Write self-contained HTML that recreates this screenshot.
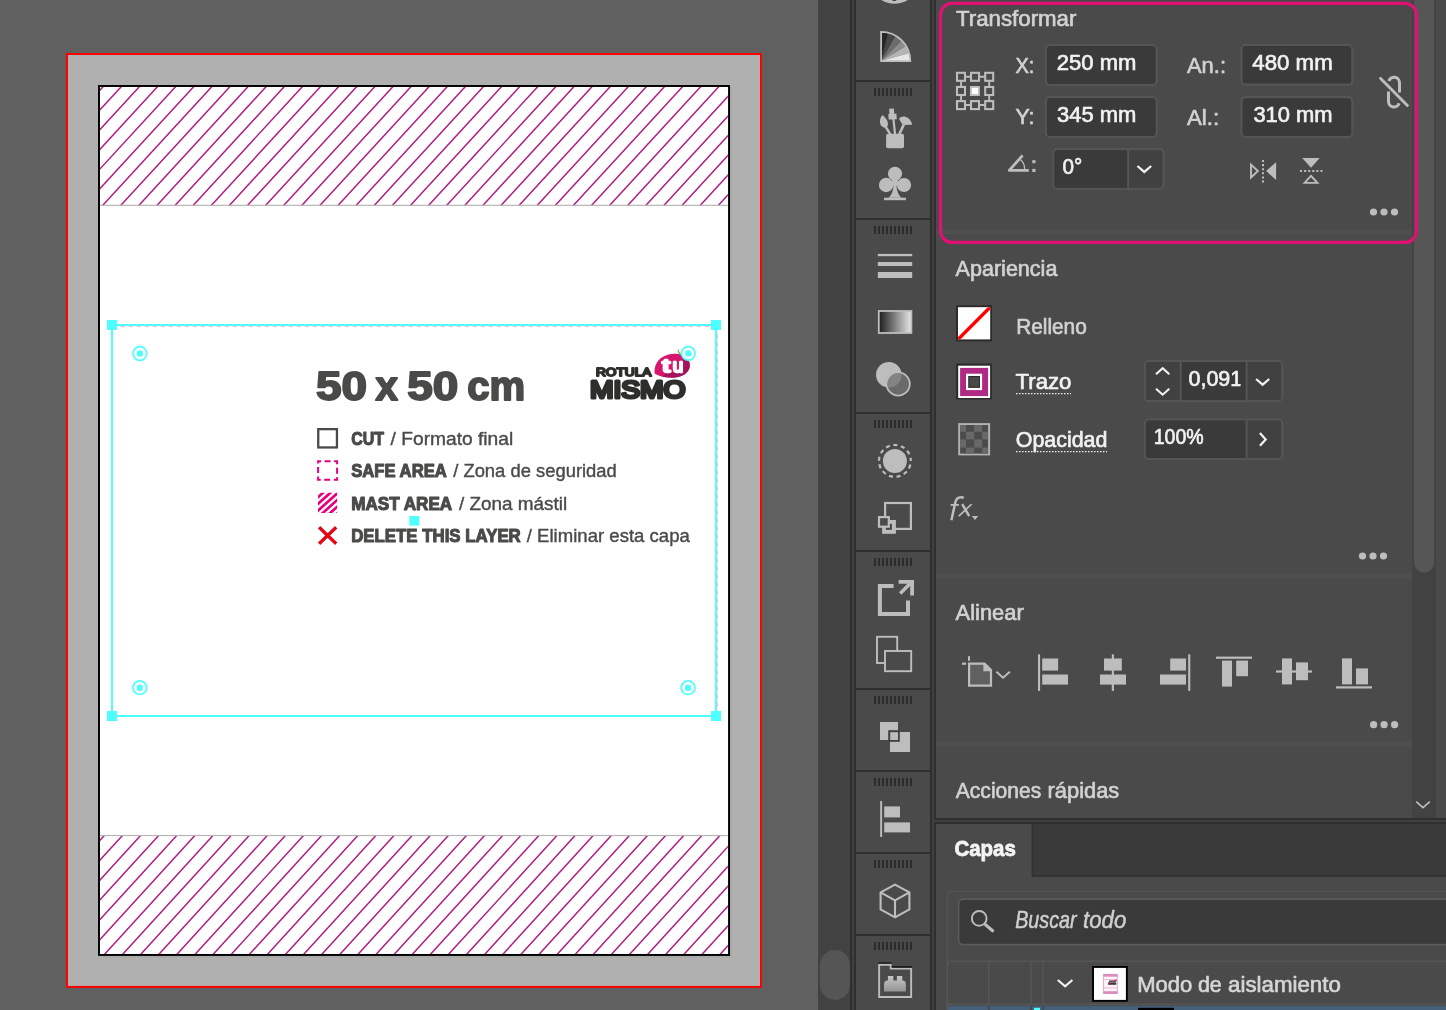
<!DOCTYPE html>
<html><head><meta charset="utf-8"><title>Illustrator</title>
<style>
html,body{margin:0;padding:0;background:#4a4a4a;overflow:hidden}
svg{display:block;will-change:transform}
text{font-family:"Liberation Sans",sans-serif;white-space:pre}
</style></head><body>
<svg width="1446" height="1010" viewBox="0 0 1446 1010">
<rect x="0" y="0" width="818" height="1010" fill="#606060" />
<rect x="67" y="54" width="694" height="932.9" fill="#b0b0b0" stroke="#ff0000" stroke-width="2"/>
<rect x="101" y="956" width="631" height="1.8" fill="#aaaaaa" />
<rect x="730" y="88" width="1.9" height="869.8" fill="#aaaaaa" />
<rect x="99" y="86" width="630.05" height="868.95" fill="#ffffff" stroke="#000" stroke-width="1.95"/>
<clipPath id="h1"><rect x="99.9" y="86.9" width="628" height="118.5"/></clipPath>
<g clip-path="url(#h1)" stroke="#b01f80" stroke-width="1.5" fill="none">
<path d="M-7.80 207.40L104.79 84.90M10.31 207.40L122.90 84.90M28.41 207.40L141.01 84.90M46.52 207.40L159.11 84.90M64.63 207.40L177.22 84.90M82.73 207.40L195.32 84.90M100.84 207.40L213.43 84.90M118.94 207.40L231.54 84.90M137.05 207.40L249.64 84.90M155.16 207.40L267.75 84.90M173.26 207.40L285.85 84.90M191.37 207.40L303.96 84.90M209.47 207.40L322.07 84.90M227.58 207.40L340.17 84.90M245.69 207.40L358.28 84.90M263.79 207.40L376.38 84.90M281.90 207.40L394.49 84.90M300.00 207.40L412.60 84.90M318.11 207.40L430.70 84.90M336.22 207.40L448.81 84.90M354.32 207.40L466.91 84.90M372.43 207.40L485.02 84.90M390.53 207.40L503.13 84.90M408.64 207.40L521.23 84.90M426.75 207.40L539.34 84.90M444.85 207.40L557.44 84.90M462.96 207.40L575.55 84.90M481.06 207.40L593.66 84.90M499.17 207.40L611.76 84.90M517.28 207.40L629.87 84.90M535.38 207.40L647.97 84.90M553.49 207.40L666.08 84.90M571.59 207.40L684.19 84.90M589.70 207.40L702.29 84.90M607.81 207.40L720.40 84.90M625.91 207.40L738.50 84.90M644.02 207.40L756.61 84.90M662.12 207.40L774.72 84.90M680.23 207.40L792.82 84.90M698.34 207.40L810.93 84.90M716.44 207.40L829.03 84.90"/>
</g>
<clipPath id="h2"><rect x="99.9" y="835.2" width="628" height="118.9"/></clipPath>
<g clip-path="url(#h2)" stroke="#b01f80" stroke-width="1.5" fill="none">
<path d="M-5.71 956.10L106.43 833.20M12.40 956.10L124.53 833.20M30.50 956.10L142.64 833.20M48.61 956.10L160.75 833.20M66.72 956.10L178.85 833.20M84.82 956.10L196.96 833.20M102.93 956.10L215.06 833.20M121.03 956.10L233.17 833.20M139.14 956.10L251.28 833.20M157.25 956.10L269.38 833.20M175.35 956.10L287.49 833.20M193.46 956.10L305.59 833.20M211.56 956.10L323.70 833.20M229.67 956.10L341.81 833.20M247.78 956.10L359.91 833.20M265.88 956.10L378.02 833.20M283.99 956.10L396.12 833.20M302.09 956.10L414.23 833.20M320.20 956.10L432.34 833.20M338.31 956.10L450.44 833.20M356.41 956.10L468.55 833.20M374.52 956.10L486.65 833.20M392.62 956.10L504.76 833.20M410.73 956.10L522.87 833.20M428.84 956.10L540.97 833.20M446.94 956.10L559.08 833.20M465.05 956.10L577.18 833.20M483.15 956.10L595.29 833.20M501.26 956.10L613.40 833.20M519.37 956.10L631.50 833.20M537.47 956.10L649.61 833.20M555.58 956.10L667.71 833.20M573.68 956.10L685.82 833.20M591.79 956.10L703.93 833.20M609.90 956.10L722.03 833.20M628.00 956.10L740.14 833.20M646.11 956.10L758.24 833.20M664.21 956.10L776.35 833.20M682.32 956.10L794.46 833.20M700.43 956.10L812.56 833.20M718.53 956.10L830.67 833.20"/>
</g>
<rect x="99.9" y="204.75" width="628" height="1.15" fill="#b6b3b4" />
<rect x="99.9" y="834.95" width="628" height="1.15" fill="#b6b3b4" />
<text x="315.9" y="399.9" font-size="41" fill="#4a4a49" stroke="#4a4a49" stroke-width="1.9" stroke-linejoin="round" textLength="51" lengthAdjust="spacingAndGlyphs" font-weight="bold" >50</text>
<text x="375.6" y="399.9" font-size="41" fill="#4a4a49" stroke="#4a4a49" stroke-width="1.9" stroke-linejoin="round" textLength="22.4" lengthAdjust="spacingAndGlyphs" font-weight="bold" >x</text>
<text x="407.2" y="399.9" font-size="41" fill="#4a4a49" stroke="#4a4a49" stroke-width="1.9" stroke-linejoin="round" textLength="51" lengthAdjust="spacingAndGlyphs" font-weight="bold" >50</text>
<text x="467.3" y="399.9" font-size="41" fill="#4a4a49" stroke="#4a4a49" stroke-width="1.9" stroke-linejoin="round" textLength="58" lengthAdjust="spacingAndGlyphs" font-weight="bold" >cm</text>
<text x="351.2" y="445" font-size="18.4" fill="#4a4a49" stroke="#4a4a49" stroke-width="1.1" stroke-linejoin="round" textLength="32.8" lengthAdjust="spacingAndGlyphs" font-weight="bold" >CUT</text>
<text x="390.6" y="445" font-size="19" fill="#4a4a49" stroke="#4a4a49" stroke-width="0.4" stroke-linejoin="round" textLength="122.6" lengthAdjust="spacingAndGlyphs" >/ Formato final</text>
<text x="351.2" y="477.3" font-size="18.4" fill="#4a4a49" stroke="#4a4a49" stroke-width="1.1" stroke-linejoin="round" textLength="95.6" lengthAdjust="spacingAndGlyphs" font-weight="bold" >SAFE AREA</text>
<text x="453.2" y="477.3" font-size="19" fill="#4a4a49" stroke="#4a4a49" stroke-width="0.4" stroke-linejoin="round" textLength="163.6" lengthAdjust="spacingAndGlyphs" >/ Zona de seguridad</text>
<text x="351.2" y="509.7" font-size="18.4" fill="#4a4a49" stroke="#4a4a49" stroke-width="1.1" stroke-linejoin="round" textLength="101" lengthAdjust="spacingAndGlyphs" font-weight="bold" >MAST AREA</text>
<text x="459" y="509.7" font-size="19" fill="#4a4a49" stroke="#4a4a49" stroke-width="0.4" stroke-linejoin="round" textLength="108.2" lengthAdjust="spacingAndGlyphs" >/ Zona mástil</text>
<text x="351.2" y="542.3" font-size="18.4" fill="#4a4a49" stroke="#4a4a49" stroke-width="1.1" stroke-linejoin="round" textLength="169.6" lengthAdjust="spacingAndGlyphs" font-weight="bold" >DELETE THIS LAYER</text>
<text x="526.8" y="542.3" font-size="19" fill="#4a4a49" stroke="#4a4a49" stroke-width="0.4" stroke-linejoin="round" textLength="163" lengthAdjust="spacingAndGlyphs" >/ Eliminar esta capa</text>
<rect x="318.25" y="429.15" width="18.7" height="18.3" fill="none" stroke="#4a4a49" stroke-width="2.3"/>
<rect x="318.1" y="461.2" width="19" height="18.6" fill="none" stroke="#e6007e" stroke-width="2" stroke-dasharray="6 3.5" stroke-dashoffset="3"/>
<clipPath id="lh"><rect x="318" y="492.8" width="19.1" height="20.1"/></clipPath>
<g clip-path="url(#lh)" stroke="#e6007e" stroke-width="2.7" fill="none"><path d="M316 478.90L340 457.30M316 485.60L340 464.00M316 492.30L340 470.70M316 499.00L340 477.40M316 505.70L340 484.10M316 512.40L340 490.80M316 519.10L340 497.50M316 525.80L340 504.20M316 532.50L340 510.90M316 539.20L340 517.60"/></g>
<path d="M319.1 527.3L336.2 543.8M336.2 527.3L319.1 543.8" stroke="#e30613" stroke-width="3.3" fill="none"/>
<text x="596" y="376.1" font-size="11.8" fill="#2e2e2d" textLength="55.4" lengthAdjust="spacingAndGlyphs" stroke="#2e2e2d" stroke-width="1.9" stroke-linejoin="round" stroke-linecap="round">ROTULA</text>
<text x="589.9" y="398.2" font-size="24.4" fill="#2e2e2d" textLength="95.6" lengthAdjust="spacingAndGlyphs" stroke="#2e2e2d" stroke-width="3.2" stroke-linejoin="round" stroke-linecap="round">MISMO</text>
<path d="M654.6 373.4 C653.6 362 662 354.4 674 353.8 C684 353.4 690.4 358.6 689.8 366 C689 373.6 680 378.6 669 377.6 C662.6 377 658 375.6 654.6 373.4Z" fill="#d6156c"/>
<path d="M683.4 357.4 C687 359 690.4 362 689.8 366.4 C689 373.6 680 378.6 669 377.6 C666.4 377.4 664 377 662 376.4 L 668 372.6 L 683 372.4 Z" fill="#a5125c"/>
<path d="M678.2 349.6 C678.4 351.6 679.4 353 680.8 354 L 679.4 354.2 C 678.4 353 678 351.4 678.2 349.6Z" fill="#6ab42d" stroke="#6ab42d" stroke-width="0.6"/>
<text x="662.3" y="371.9" font-size="18.6" fill="#fff" textLength="7.8" lengthAdjust="spacingAndGlyphs" stroke="#fff" stroke-width="2.3" stroke-linejoin="round" stroke-linecap="round">t</text>
<text x="672.7" y="371.9" font-size="18.2" fill="#fff" textLength="10.4" lengthAdjust="spacingAndGlyphs" stroke="#fff" stroke-width="2.3" stroke-linejoin="round" stroke-linecap="round">u</text>
<path d="M717.6 326.5V716" stroke="#f9b6d0" stroke-width="1" stroke-dasharray="4 4" fill="none"/>
<path d="M113 326.6H716" stroke="#f9b6d0" stroke-width="1" stroke-dasharray="4 4" fill="none"/>
<rect x="112" y="325" width="604" height="391" fill="none" stroke="#4dffff" stroke-width="2"/>
<rect x="107" y="320" width="10" height="10" fill="#4dffff" />
<rect x="711" y="320" width="10" height="10" fill="#4dffff" />
<rect x="107" y="711" width="10" height="10" fill="#4dffff" />
<rect x="711" y="711" width="10" height="10" fill="#4dffff" />
<rect x="409.3" y="516" width="10" height="9.6" fill="#4dffff" />
<circle cx="139.9" cy="353.5" r="6.8" fill="#ffffff" stroke="#4dffff" stroke-width="1.7"/><circle cx="139.9" cy="353.5" r="3.2" fill="#4dffff"/>
<circle cx="688.3" cy="353.4" r="6.8" fill="#ffffff" stroke="#4dffff" stroke-width="1.7"/><circle cx="688.3" cy="353.4" r="3.2" fill="#4dffff"/>
<circle cx="139.8" cy="687.7" r="6.8" fill="#ffffff" stroke="#4dffff" stroke-width="1.7"/><circle cx="139.8" cy="687.7" r="3.2" fill="#4dffff"/>
<circle cx="688.1" cy="687.7" r="6.8" fill="#ffffff" stroke="#4dffff" stroke-width="1.7"/><circle cx="688.1" cy="687.7" r="3.2" fill="#4dffff"/>
<rect x="818" y="0" width="32" height="1010" fill="#424242" />
<rect x="820" y="950" width="30" height="50" rx="15" fill="#555555"/>
<rect x="850" y="0" width="2" height="1010" fill="#2f2f2f" />
<rect x="852" y="0" width="2" height="1010" fill="#404040" />
<rect x="854" y="0" width="2" height="1010" fill="#2f2f2f" />
<rect x="856" y="0" width="74" height="1010" fill="#4a4a4a" />
<rect x="930" y="0" width="2" height="1010" fill="#2f2f2f" />
<rect x="932" y="0" width="2" height="1010" fill="#404040" />
<rect x="934" y="0" width="2" height="1010" fill="#2f2f2f" />
<rect x="856" y="80" width="74" height="2" fill="#2f2f2f" />
<rect x="874" y="88" width="2.05" height="8" fill="#2c2c2c" />
<rect x="878" y="88" width="2.05" height="8" fill="#2c2c2c" />
<rect x="882" y="88" width="2.05" height="8" fill="#2c2c2c" />
<rect x="886" y="88" width="2.05" height="8" fill="#2c2c2c" />
<rect x="890" y="88" width="2.05" height="8" fill="#2c2c2c" />
<rect x="894" y="88" width="2.05" height="8" fill="#2c2c2c" />
<rect x="898" y="88" width="2.05" height="8" fill="#2c2c2c" />
<rect x="902" y="88" width="2.05" height="8" fill="#2c2c2c" />
<rect x="906" y="88" width="2.05" height="8" fill="#2c2c2c" />
<rect x="910" y="88" width="2.05" height="8" fill="#2c2c2c" />
<rect x="856" y="218" width="74" height="2" fill="#2f2f2f" />
<rect x="874" y="226" width="2.05" height="8" fill="#2c2c2c" />
<rect x="878" y="226" width="2.05" height="8" fill="#2c2c2c" />
<rect x="882" y="226" width="2.05" height="8" fill="#2c2c2c" />
<rect x="886" y="226" width="2.05" height="8" fill="#2c2c2c" />
<rect x="890" y="226" width="2.05" height="8" fill="#2c2c2c" />
<rect x="894" y="226" width="2.05" height="8" fill="#2c2c2c" />
<rect x="898" y="226" width="2.05" height="8" fill="#2c2c2c" />
<rect x="902" y="226" width="2.05" height="8" fill="#2c2c2c" />
<rect x="906" y="226" width="2.05" height="8" fill="#2c2c2c" />
<rect x="910" y="226" width="2.05" height="8" fill="#2c2c2c" />
<rect x="856" y="412" width="74" height="2" fill="#2f2f2f" />
<rect x="874" y="420" width="2.05" height="8" fill="#2c2c2c" />
<rect x="878" y="420" width="2.05" height="8" fill="#2c2c2c" />
<rect x="882" y="420" width="2.05" height="8" fill="#2c2c2c" />
<rect x="886" y="420" width="2.05" height="8" fill="#2c2c2c" />
<rect x="890" y="420" width="2.05" height="8" fill="#2c2c2c" />
<rect x="894" y="420" width="2.05" height="8" fill="#2c2c2c" />
<rect x="898" y="420" width="2.05" height="8" fill="#2c2c2c" />
<rect x="902" y="420" width="2.05" height="8" fill="#2c2c2c" />
<rect x="906" y="420" width="2.05" height="8" fill="#2c2c2c" />
<rect x="910" y="420" width="2.05" height="8" fill="#2c2c2c" />
<rect x="856" y="550" width="74" height="2" fill="#2f2f2f" />
<rect x="874" y="558" width="2.05" height="8" fill="#2c2c2c" />
<rect x="878" y="558" width="2.05" height="8" fill="#2c2c2c" />
<rect x="882" y="558" width="2.05" height="8" fill="#2c2c2c" />
<rect x="886" y="558" width="2.05" height="8" fill="#2c2c2c" />
<rect x="890" y="558" width="2.05" height="8" fill="#2c2c2c" />
<rect x="894" y="558" width="2.05" height="8" fill="#2c2c2c" />
<rect x="898" y="558" width="2.05" height="8" fill="#2c2c2c" />
<rect x="902" y="558" width="2.05" height="8" fill="#2c2c2c" />
<rect x="906" y="558" width="2.05" height="8" fill="#2c2c2c" />
<rect x="910" y="558" width="2.05" height="8" fill="#2c2c2c" />
<rect x="856" y="688" width="74" height="2" fill="#2f2f2f" />
<rect x="874" y="696" width="2.05" height="8" fill="#2c2c2c" />
<rect x="878" y="696" width="2.05" height="8" fill="#2c2c2c" />
<rect x="882" y="696" width="2.05" height="8" fill="#2c2c2c" />
<rect x="886" y="696" width="2.05" height="8" fill="#2c2c2c" />
<rect x="890" y="696" width="2.05" height="8" fill="#2c2c2c" />
<rect x="894" y="696" width="2.05" height="8" fill="#2c2c2c" />
<rect x="898" y="696" width="2.05" height="8" fill="#2c2c2c" />
<rect x="902" y="696" width="2.05" height="8" fill="#2c2c2c" />
<rect x="906" y="696" width="2.05" height="8" fill="#2c2c2c" />
<rect x="910" y="696" width="2.05" height="8" fill="#2c2c2c" />
<rect x="856" y="770" width="74" height="2" fill="#2f2f2f" />
<rect x="874" y="778" width="2.05" height="8" fill="#2c2c2c" />
<rect x="878" y="778" width="2.05" height="8" fill="#2c2c2c" />
<rect x="882" y="778" width="2.05" height="8" fill="#2c2c2c" />
<rect x="886" y="778" width="2.05" height="8" fill="#2c2c2c" />
<rect x="890" y="778" width="2.05" height="8" fill="#2c2c2c" />
<rect x="894" y="778" width="2.05" height="8" fill="#2c2c2c" />
<rect x="898" y="778" width="2.05" height="8" fill="#2c2c2c" />
<rect x="902" y="778" width="2.05" height="8" fill="#2c2c2c" />
<rect x="906" y="778" width="2.05" height="8" fill="#2c2c2c" />
<rect x="910" y="778" width="2.05" height="8" fill="#2c2c2c" />
<rect x="856" y="852" width="74" height="2" fill="#2f2f2f" />
<rect x="874" y="860" width="2.05" height="8" fill="#2c2c2c" />
<rect x="878" y="860" width="2.05" height="8" fill="#2c2c2c" />
<rect x="882" y="860" width="2.05" height="8" fill="#2c2c2c" />
<rect x="886" y="860" width="2.05" height="8" fill="#2c2c2c" />
<rect x="890" y="860" width="2.05" height="8" fill="#2c2c2c" />
<rect x="894" y="860" width="2.05" height="8" fill="#2c2c2c" />
<rect x="898" y="860" width="2.05" height="8" fill="#2c2c2c" />
<rect x="902" y="860" width="2.05" height="8" fill="#2c2c2c" />
<rect x="906" y="860" width="2.05" height="8" fill="#2c2c2c" />
<rect x="910" y="860" width="2.05" height="8" fill="#2c2c2c" />
<rect x="856" y="934" width="74" height="2" fill="#2f2f2f" />
<rect x="874" y="942" width="2.05" height="8" fill="#2c2c2c" />
<rect x="878" y="942" width="2.05" height="8" fill="#2c2c2c" />
<rect x="882" y="942" width="2.05" height="8" fill="#2c2c2c" />
<rect x="886" y="942" width="2.05" height="8" fill="#2c2c2c" />
<rect x="890" y="942" width="2.05" height="8" fill="#2c2c2c" />
<rect x="894" y="942" width="2.05" height="8" fill="#2c2c2c" />
<rect x="898" y="942" width="2.05" height="8" fill="#2c2c2c" />
<rect x="902" y="942" width="2.05" height="8" fill="#2c2c2c" />
<rect x="906" y="942" width="2.05" height="8" fill="#2c2c2c" />
<rect x="910" y="942" width="2.05" height="8" fill="#2c2c2c" />
<ellipse cx="894.6" cy="-8" rx="18" ry="11.8" fill="#bdbdbd"/>
<ellipse cx="894.3" cy="-1.2" rx="2.7" ry="2.2" fill="#3a3a3a"/>
<g>
<path d="M881.1 61.05L881.10 31.85A29.2 29.2 0 0 1 888.16 32.72Z" fill="#262626"/>
<path d="M881.1 61.05L888.16 32.72A29.2 29.2 0 0 1 895.70 35.76Z" fill="#464646"/>
<path d="M881.1 61.05L895.70 35.76A29.2 29.2 0 0 1 901.75 40.40Z" fill="#6c6c6c"/>
<path d="M881.1 61.05L901.75 40.40A29.2 29.2 0 0 1 906.13 46.01Z" fill="#8c8c8c"/>
<path d="M881.1 61.05L906.13 46.01A29.2 29.2 0 0 1 909.17 53.00Z" fill="#b4b4b4"/>
<path d="M881.1 61.05L909.17 53.00A29.2 29.2 0 0 1 910.30 61.05Z" fill="#e6e6e6"/>
<path d="M881.1 61.05L881.1 31.849999999999998A29.2 29.2 0 0 1 910.3000000000001 61.05Z" fill="none" stroke="#bdbdbd" stroke-width="1.8" stroke-linejoin="miter"/>
</g>
<g fill="#bdbdbd" stroke="none">
<rect x="886.1" y="133.8" width="17.9" height="14.4" rx="2"/>
<path d="M889.1 108.8L893.9 108.4L894.2 113.7L896.4 113.6L896.8 119.2L894.6 119.3L896.2 134.2L893.9 134.4L892.4 119.4L888.7 119.5L888.3 114L889.4 113.9Z"/>
<path d="M882.5 115C879 118.5 879.3 124 882 126.6C883.4 127.8 885 128 886.4 127.4C888.8 125.4 889 120.4 882.5 115Z"/>
<path d="M884.7 127.4L886.9 126.4L891.6 133.9L889.2 134.8Z"/>
<path d="M899.1 118.6C901.5 115.4 908.6 115 912 123.6C912.2 124.4 911.8 124.8 911 124.8L903.2 125C901.4 123.4 900 121.2 899.1 118.6Z"/>
<path d="M902.4 124.2L905 125.2L900.5 134.4L898 133.9Z"/>
</g>
<g fill="#bdbdbd">
<circle cx="895" cy="173.8" r="7.1"/><circle cx="886.1" cy="185" r="7.2"/><circle cx="904" cy="185" r="7.1"/>
<path d="M893.6 182H896.4C896.4 189 897.6 194.6 901.6 197.8H888.4C892.4 194.6 893.6 189 893.6 182Z"/>
<rect x="884" y="197.7" width="21.9" height="2.5"/>
<circle cx="895" cy="182.6" r="3.4"/>
</g>
<rect x="877.8" y="253.9" width="34.4" height="2.3" fill="#bdbdbd" />
<rect x="877.8" y="262" width="34.4" height="4" fill="#bdbdbd" />
<rect x="877.8" y="272" width="34.4" height="6" fill="#bdbdbd" />
<linearGradient id="gg" x1="0" x2="1" y1="0" y2="0"><stop offset="0" stop-color="#1c1c1c"/><stop offset="1" stop-color="#e8e8e8"/></linearGradient>
<rect x="878.8" y="311" width="32.6" height="22" fill="url(#gg)" stroke="#bdbdbd" stroke-width="1.8"/>
<circle cx="888.8" cy="374.8" r="12.8" fill="#bdbdbd"/>
<circle cx="898.2" cy="384" r="11.6" fill="#6a6a6a" stroke="#bdbdbd" stroke-width="1.8"/>
<clipPath id="tc"><circle cx="888.8" cy="374.8" r="12.8"/></clipPath>
<circle cx="898.2" cy="384" r="10.7" fill="#848484" clip-path="url(#tc)"/>
<circle cx="894.9" cy="460.9" r="12" fill="#bdbdbd"/>
<circle cx="894.9" cy="460.9" r="15.9" fill="none" stroke="#bdbdbd" stroke-width="2.2" stroke-dasharray="4.1 3.585" stroke-dashoffset="3.971"/>
<rect x="885.1" y="503" width="25.8" height="25.9" fill="none" stroke="#bdbdbd" stroke-width="2.2"/>
<rect x="882.1" y="520" width="13.8" height="13.8" fill="#bdbdbd" />
<rect x="885.9" y="523.9" width="6" height="5.9" fill="#454545" />
<rect x="879" y="517.1" width="9.8" height="9.6" fill="#4a4a4a" stroke="#bdbdbd" stroke-width="2.2"/>
<path d="M893.6 586H879.9V614H908V600.5" fill="none" stroke="#bdbdbd" stroke-width="4"/>
<path d="M900.2 593.4L911.4 582.2" stroke="#bdbdbd" stroke-width="3.6" fill="none"/>
<path d="M898.6 580H914V595.4H910.2V583.8H898.6Z" fill="#bdbdbd"/>
<rect x="877" y="636.8" width="20.2" height="26.2" fill="none" stroke="#bdbdbd" stroke-width="1.9"/>
<rect x="885" y="651" width="26.2" height="20.2" fill="#4a4a4a" stroke="#bdbdbd" stroke-width="1.9"/>
<rect x="880" y="722" width="18" height="18" fill="#bdbdbd" />
<rect x="890" y="732" width="20" height="20" fill="#bdbdbd" />
<rect x="888.2" y="730.2" width="11.6" height="11.6" fill="#414141" />
<rect x="890.2" y="732.2" width="7.8" height="7.8" fill="#bdbdbd" />
<rect x="880.2" y="801" width="1.9" height="36" fill="#bdbdbd" />
<rect x="884.2" y="806.4" width="15.8" height="11" fill="#bdbdbd" />
<rect x="884.2" y="822.4" width="25.8" height="10" fill="#bdbdbd" />
<path d="M895 884.6L909.4 892.4V909.4L895 917.4L880.6 909.4V892.4ZM880.6 892.4L895 900.4L909.4 892.4M895 900.4V917.4" fill="none" stroke="#bdbdbd" stroke-width="2.1" stroke-linejoin="round"/>
<linearGradient id="pg" x1="0" x2="0" y1="0" y2="1"><stop offset="0" stop-color="#c6c6c6"/><stop offset="1" stop-color="#949494"/></linearGradient>
<path d="M879.15 964.8H890.7V968.65H911.15V996.95H879.15Z" fill="#4a4a4a" stroke="#bdbdbd" stroke-width="1.9"/>
<path d="M878.2 962.3H891.7V963.85H878.2ZM891.7 966.1H912.1V967.7H891.7Z" fill="#1c1c1c"/>
<path d="M884 991.5V984.2C884 982 885.4 980.5 887.4 980.5H887.9V976H893.3V980.5H896.9V976H902.3V980.5H902.6C904.6 980.5 905.9 982 905.9 984.2V991.5Z" fill="url(#pg)"/>
<rect x="936" y="0" width="510" height="818" fill="#4a4a4a" />
<rect x="1412.4" y="0" width="23.6" height="818" fill="#424242" />
<rect x="1414" y="-30" width="20.2" height="602.4" rx="10.1" fill="#565656"/>
<path d="M1416.2 801.6L1423 807.6L1429.8 801.6" fill="none" stroke="#bdbdbd" stroke-width="1.7"/>
<rect x="936" y="230" width="476" height="4" fill="#4d4d4d" />
<rect x="936" y="230" width="476" height="1" fill="#515151" />
<rect x="936" y="233" width="476" height="1" fill="#515151" />
<rect x="936" y="573.9" width="476" height="4" fill="#4d4d4d" />
<rect x="936" y="573.9" width="476" height="1" fill="#515151" />
<rect x="936" y="576.9" width="476" height="1" fill="#515151" />
<rect x="936" y="741.9" width="476" height="4" fill="#4d4d4d" />
<rect x="936" y="741.9" width="476" height="1" fill="#515151" />
<rect x="936" y="744.9" width="476" height="1" fill="#515151" />
<rect x="934" y="818" width="512" height="2" fill="#2f2f2f" />
<rect x="934" y="820" width="512" height="2" fill="#404040" />
<rect x="934" y="822" width="512" height="2" fill="#2f2f2f" />
<rect x="932" y="820" width="4" height="2" fill="#404040" />
<rect x="940.45" y="3.4" width="476.05" height="239" rx="11.6" fill="none" stroke="#df1173" stroke-width="3.2"/>
<text x="956" y="25.7" font-size="21.4" fill="#d2d2d2" stroke="#d2d2d2" stroke-width="0.65" stroke-linejoin="round" textLength="120.4" lengthAdjust="spacingAndGlyphs" >Transformar</text>
<g fill="none" stroke="#bdbdbd" stroke-width="2.1">
<path d="M961 76.8H989.4M961 105H989.4M961.1 76.8V104.8M989.2 76.8V104.8" stroke-width="1.9"/>
<rect x="957" y="72.8" width="8" height="8" fill="#4a4a4a"/>
<rect x="957" y="87" width="8" height="8" fill="#4a4a4a"/>
<rect x="957" y="101.1" width="8" height="8" fill="#4a4a4a"/>
<rect x="971" y="72.8" width="8" height="8" fill="#4a4a4a"/>
<rect x="971" y="101.1" width="8" height="8" fill="#4a4a4a"/>
<rect x="985.2" y="72.8" width="8" height="8" fill="#4a4a4a"/>
<rect x="985.2" y="87" width="8" height="8" fill="#4a4a4a"/>
<rect x="985.2" y="101.1" width="8" height="8" fill="#4a4a4a"/>
</g>
<rect x="969.9" y="86" width="10" height="10" fill="#bdbdbd" />
<rect x="971.8" y="87.9" width="6.3" height="6.3" fill="#ffffff" />
<text x="1015.4" y="73" font-size="21.4" fill="#d2d2d2" stroke="#d2d2d2" stroke-width="0.65" stroke-linejoin="round" textLength="19" lengthAdjust="spacingAndGlyphs" >X:</text>
<rect x="1045.85" y="44.95" width="110.8" height="40" rx="4" fill="#3a3a3a" stroke="#555555" stroke-width="2.1"/>
<text x="1056.8" y="70.2" font-size="21.8" fill="#f2f2f2" stroke="#f2f2f2" stroke-width="0.65" stroke-linejoin="round" textLength="79.6" lengthAdjust="spacingAndGlyphs" >250 mm</text>
<text x="1015.4" y="124" font-size="21.4" fill="#d2d2d2" stroke="#d2d2d2" stroke-width="0.65" stroke-linejoin="round" textLength="19" lengthAdjust="spacingAndGlyphs" >Y:</text>
<rect x="1045.85" y="97.05" width="110.9" height="39.95" rx="4" fill="#3a3a3a" stroke="#555555" stroke-width="2.1"/>
<text x="1057" y="122.2" font-size="21.8" fill="#f2f2f2" stroke="#f2f2f2" stroke-width="0.65" stroke-linejoin="round" textLength="79.4" lengthAdjust="spacingAndGlyphs" >345 mm</text>
<path d="M1028.8 170.4H1009.2L1022.6 155.4" fill="none" stroke="#bdbdbd" stroke-width="2.8" stroke-linejoin="round"/>
<path d="M1020.2 159.6C1023.4 162 1024.8 165.4 1024.6 169.4" fill="none" stroke="#bdbdbd" stroke-width="1.3"/>
<rect x="1032.3" y="160.2" width="3.2" height="3" fill="#bdbdbd" />
<rect x="1032.3" y="168.9" width="3.2" height="3.1" fill="#bdbdbd" />
<rect x="1053.35" y="149.15" width="110.2" height="39.6" rx="4" fill="#414141" stroke="#555555" stroke-width="2.1"/>
<path d="M1057.4 150.2H1127.2V187.7H1057.4A3 3 0 0 1 1054.4 184.7V153.2A3 3 0 0 1 1057.4 150.2Z" fill="#3a3a3a"/>
<rect x="1127.1" y="150.2" width="1.9" height="37.5" fill="#555555" />
<text x="1062.6" y="174" font-size="22" fill="#f2f2f2" stroke="#f2f2f2" stroke-width="0.65" stroke-linejoin="round" textLength="19.8" lengthAdjust="spacingAndGlyphs" >0°</text>
<path d="M1137.4 166L1144.3 171.9L1151.2 166" fill="none" stroke="#f2f2f2" stroke-width="2.3"/>
<text x="1187" y="73" font-size="21.4" fill="#d2d2d2" stroke="#d2d2d2" stroke-width="0.65" stroke-linejoin="round" textLength="39" lengthAdjust="spacingAndGlyphs" >An.:</text>
<rect x="1241.45" y="44.95" width="110.9" height="39.7" rx="4" fill="#3a3a3a" stroke="#555555" stroke-width="2.1"/>
<text x="1252.3" y="70.2" font-size="21.8" fill="#f2f2f2" stroke="#f2f2f2" stroke-width="0.65" stroke-linejoin="round" textLength="80.4" lengthAdjust="spacingAndGlyphs" >480 mm</text>
<text x="1187" y="124.6" font-size="21.4" fill="#d2d2d2" stroke="#d2d2d2" stroke-width="0.65" stroke-linejoin="round" textLength="32.2" lengthAdjust="spacingAndGlyphs" >Al.:</text>
<rect x="1241.45" y="97.15" width="110.9" height="39.8" rx="4" fill="#3a3a3a" stroke="#555555" stroke-width="2.1"/>
<text x="1253.4" y="122.3" font-size="21.8" fill="#f2f2f2" stroke="#f2f2f2" stroke-width="0.65" stroke-linejoin="round" textLength="79.2" lengthAdjust="spacingAndGlyphs" >310 mm</text>
<g fill="none" stroke="#bdbdbd" stroke-width="2.2" stroke-linecap="round">
<path d="M1388.8 80.9A5.5 5.5 0 0 1 1399.5 82.8V92.4" stroke-width="3" stroke-linecap="butt"/>
<path d="M1388.5 91.4V101.4A5.5 5.5 0 0 0 1399.2 103.3" stroke-width="3" stroke-linecap="butt"/>
<path d="M1380.6 78.4L1407.4 105.4" stroke-width="2.9"/>
</g>
<path d="M1251 164.6L1257.9 171L1251 177.5Z" fill="none" stroke="#bdbdbd" stroke-width="1.9"/>
<path d="M1276.1 162.2L1266.1 171L1276.1 179.9Z" fill="#bdbdbd"/>
<path d="M1263 160V182.4" stroke="#bdbdbd" stroke-width="2" stroke-dasharray="2.05 2.05" fill="none"/>
<path d="M1302.2 158.1L1311 167.8L1319.7 158.1Z" fill="#bdbdbd"/>
<path d="M1304.6 182.9L1311 175.9L1317.4 182.9Z" fill="none" stroke="#bdbdbd" stroke-width="1.9"/>
<path d="M1300 171H1322.4" stroke="#bdbdbd" stroke-width="2" stroke-dasharray="2.05 2.05" fill="none"/>
<circle cx="1373.5" cy="212" r="3.6" fill="#bdbdbd"/>
<circle cx="1384" cy="212" r="3.6" fill="#bdbdbd"/>
<circle cx="1394.5" cy="212" r="3.6" fill="#bdbdbd"/>
<text x="955.6" y="275.7" font-size="21.4" fill="#d2d2d2" stroke="#d2d2d2" stroke-width="0.65" stroke-linejoin="round" textLength="101.8" lengthAdjust="spacingAndGlyphs" >Apariencia</text>
<rect x="956" y="305.3" width="36" height="36.1" fill="#2b2b2b" />
<rect x="958" y="307.2" width="32.2" height="32.2" fill="#ffffff" />
<clipPath id="fs"><rect x="958" y="307.2" width="32.2" height="32.2"/></clipPath>
<path d="M957 340.4L991.2 306.2" stroke="#ff0000" stroke-width="3.5" clip-path="url(#fs)"/>
<text x="1016.2" y="333.6" font-size="21.3" fill="#d2d2d2" stroke="#d2d2d2" stroke-width="0.65" stroke-linejoin="round" textLength="70.6" lengthAdjust="spacingAndGlyphs" >Relleno</text>
<rect x="956.2" y="363.5" width="35.7" height="35.9" fill="#2b2b2b" />
<rect x="958.2" y="365.7" width="31.9" height="32.3" fill="#ffffff" />
<rect x="960.1" y="367.9" width="28" height="28.2" fill="#b02a84" />
<rect x="966" y="373.7" width="16.1" height="16.4" fill="#ffffff" />
<rect x="968.2" y="376" width="11.8" height="11.9" fill="#2c2c2c" />
<rect x="969.3" y="377.1" width="9.6" height="9.7" fill="#484848" />
<text x="1015.6" y="389.4" font-size="21.3" fill="#f2f2f2" stroke="#f2f2f2" stroke-width="0.65" stroke-linejoin="round" textLength="55.8" lengthAdjust="spacingAndGlyphs" >Trazo</text>
<path d="M1016 393.6H1071" stroke="#f2f2f2" stroke-width="1.3" stroke-dasharray="1.5 1.5"/>
<rect x="1144.85" y="361.05" width="137.4" height="40.1" rx="4" fill="#414141" stroke="#555555" stroke-width="2.1"/>
<rect x="1181.7" y="362.1" width="64" height="38" fill="#3a3a3a" />
<rect x="1179.7" y="362.1" width="2" height="38" fill="#555555" />
<rect x="1245.7" y="362.1" width="1.9" height="38" fill="#555555" />
<path d="M1156 374.2L1162.65 368.2L1169.3 374.2M1156 388.7L1162.65 394.7L1169.3 388.7" fill="none" stroke="#f2f2f2" stroke-width="2.1"/>
<clipPath id="sv"><rect x="1181.7" y="362" width="58.8" height="38"/></clipPath>
<text x="1188.5" y="385.8" font-size="21.8" fill="#f2f2f2" stroke="#f2f2f2" stroke-width="0.65" stroke-linejoin="round" textLength="65.6" lengthAdjust="spacingAndGlyphs" clip-path="url(#sv)">0,0917</text>
<path d="M1256.1 379L1262.65 384.7L1269.2 379" fill="none" stroke="#f2f2f2" stroke-width="2.2"/>
<rect x="958.2" y="423.1" width="31.9" height="32.3" fill="#b2b2b2" />
<rect x="960.1" y="425" width="28" height="28.6" fill="#4c4c4c" />
<rect x="960.1" y="425" width="5.9" height="6.8" fill="#686868" />
<rect x="960.1" y="439.4" width="5.9" height="8.2" fill="#686868" />
<rect x="966" y="431.8" width="8.2" height="7.6" fill="#686868" />
<rect x="966" y="447.6" width="8.2" height="6" fill="#686868" />
<rect x="974.2" y="425" width="7.9" height="6.8" fill="#686868" />
<rect x="974.2" y="439.4" width="7.9" height="8.2" fill="#686868" />
<rect x="982.1" y="431.8" width="6" height="7.6" fill="#686868" />
<rect x="982.1" y="447.6" width="6" height="6" fill="#686868" />
<text x="1015.8" y="446.8" font-size="21.3" fill="#f2f2f2" stroke="#f2f2f2" stroke-width="0.65" stroke-linejoin="round" textLength="91.6" lengthAdjust="spacingAndGlyphs" >Opacidad</text>
<path d="M1016 451.6H1107" stroke="#f2f2f2" stroke-width="1.3" stroke-dasharray="1.5 1.5"/>
<rect x="1144.85" y="419.45" width="137.4" height="39.5" rx="4" fill="#414141" stroke="#555555" stroke-width="2.1"/>
<path d="M1148.9 420.5H1245.7V457.9H1148.9A3 3 0 0 1 1145.9 454.9V423.5A3 3 0 0 1 1148.9 420.5Z" fill="#3a3a3a"/>
<rect x="1245.7" y="420.5" width="1.9" height="37.4" fill="#555555" />
<text x="1153.7" y="443.9" font-size="21.8" fill="#f2f2f2" stroke="#f2f2f2" stroke-width="0.65" stroke-linejoin="round" textLength="50" lengthAdjust="spacingAndGlyphs" >100%</text>
<path d="M1259.9 433L1265.7 439.4L1259.9 445.8" fill="none" stroke="#f2f2f2" stroke-width="2.2"/>
<g fill="none" stroke="#bdbdbd">
<path d="M951.4 520.2L955.3 502.4C956.1 498.8 958.2 497.2 961 497.2C962 497.2 963 497.4 963.8 497.8" stroke-width="2.5"/>
<path d="M950.6 504.9H958.9" stroke-width="1.8"/>
<path d="M962.2 504.2L969.2 516.2" stroke-width="2.5"/>
<path d="M971.6 504.2L958.8 516.2" stroke-width="1.7"/>
</g>
<path d="M971.8 515.9H978.2L975 519.9Z" fill="#bdbdbd"/>
<circle cx="1362.5" cy="556" r="3.6" fill="#bdbdbd"/>
<circle cx="1373" cy="556" r="3.6" fill="#bdbdbd"/>
<circle cx="1383.5" cy="556" r="3.6" fill="#bdbdbd"/>
<text x="955.6" y="619.9" font-size="21.4" fill="#d2d2d2" stroke="#d2d2d2" stroke-width="0.65" stroke-linejoin="round" textLength="68.2" lengthAdjust="spacingAndGlyphs" >Alinear</text>
<rect x="968" y="656.2" width="2" height="4.6" fill="#bdbdbd" />
<rect x="962" y="662.6" width="4.2" height="2.2" fill="#bdbdbd" />
<path d="M969.1 663.6H984.6L991 670V685.7H969.1Z" fill="#606060" stroke="#bdbdbd" stroke-width="2.2" stroke-linejoin="miter"/>
<path d="M983.4 662.6L992 671.2H983.4Z" fill="#bdbdbd"/>
<path d="M996.4 671.8L1003.1 677.7L1009.8 671.8" fill="none" stroke="#bdbdbd" stroke-width="2"/>
<rect x="1038" y="654.3" width="2.1" height="36.6" fill="#bdbdbd" />
<rect x="1042.2" y="658.5" width="15.9" height="12.1" fill="#bdbdbd" />
<rect x="1042.2" y="674.5" width="25.8" height="10.1" fill="#bdbdbd" />
<rect x="1111.8" y="654.3" width="2.1" height="36.6" fill="#bdbdbd" />
<rect x="1104" y="658.5" width="17.8" height="12.1" fill="#bdbdbd" />
<rect x="1100" y="674.5" width="26" height="10.1" fill="#bdbdbd" />
<rect x="1188.2" y="654.3" width="2.1" height="36.6" fill="#bdbdbd" />
<rect x="1170.2" y="658.5" width="15.8" height="12.1" fill="#bdbdbd" />
<rect x="1160" y="674.5" width="26" height="10.1" fill="#bdbdbd" />
<rect x="1216" y="656.6" width="36" height="2.2" fill="#bdbdbd" />
<rect x="1222" y="660.6" width="10" height="26" fill="#bdbdbd" />
<rect x="1236.2" y="660.6" width="11.8" height="15.6" fill="#bdbdbd" />
<rect x="1276" y="670.4" width="36" height="2.2" fill="#bdbdbd" />
<rect x="1282" y="658.4" width="10" height="26" fill="#bdbdbd" />
<rect x="1296" y="662.4" width="12" height="17.8" fill="#bdbdbd" />
<rect x="1336" y="686.3" width="36" height="2.2" fill="#bdbdbd" />
<rect x="1342" y="658.4" width="10" height="26" fill="#bdbdbd" />
<rect x="1356" y="668.4" width="12" height="16" fill="#bdbdbd" />
<circle cx="1373.6" cy="724.7" r="3.6" fill="#bdbdbd"/>
<circle cx="1384.1" cy="724.7" r="3.6" fill="#bdbdbd"/>
<circle cx="1394.6" cy="724.7" r="3.6" fill="#bdbdbd"/>
<text x="955.8" y="797.7" font-size="21.4" fill="#d2d2d2" stroke="#d2d2d2" stroke-width="0.65" stroke-linejoin="round" textLength="85.4" lengthAdjust="spacingAndGlyphs" >Acciones</text>
<text x="1047.6" y="797.7" font-size="21.4" fill="#d2d2d2" stroke="#d2d2d2" stroke-width="0.65" stroke-linejoin="round" textLength="71.7" lengthAdjust="spacingAndGlyphs" >rápidas</text>
<rect x="936" y="824" width="510" height="186" fill="#4a4a4a" />
<rect x="1032" y="824" width="414" height="53" fill="#3a3a3a" />
<rect x="1032" y="875.2" width="414" height="1.8" fill="#333333" />
<rect x="1031.6" y="824" width="1.8" height="53" fill="#343434" />
<text x="954.4" y="855.9" font-size="21.4" fill="#f4f4f4" stroke="#f4f4f4" stroke-width="0.8" stroke-linejoin="round" textLength="61.4" lengthAdjust="spacingAndGlyphs" font-weight="bold" >Capas</text>
<rect x="947.4" y="891.4" width="520" height="140" rx="4" fill="none" stroke="#545454" stroke-width="1.4"/>
<rect x="958.6" y="899.2" width="520" height="45.4" rx="4.5" fill="#3a3a3a" stroke="#5a5a5a" stroke-width="1.7"/>
<circle cx="979.2" cy="918.4" r="7.35" fill="none" stroke="#bdbdbd" stroke-width="1.9"/>
<path d="M985.4 924.6L992.6 930.8" stroke="#bdbdbd" stroke-width="3.2" stroke-linecap="round"/>
<text x="1015.2" y="927.9" font-size="23.2" fill="#cfcfcf" stroke="#cfcfcf" stroke-width="0.5" stroke-linejoin="round" textLength="61.3" lengthAdjust="spacingAndGlyphs" font-style="italic" >Buscar</text>
<text x="1083.1" y="927.9" font-size="23.2" fill="#cfcfcf" stroke="#cfcfcf" stroke-width="0.5" stroke-linejoin="round" textLength="43.2" lengthAdjust="spacingAndGlyphs" font-style="italic" >todo</text>
<rect x="947.4" y="961.3" width="520" height="80" rx="4.5" fill="none" stroke="#565656" stroke-width="1.4"/>
<rect x="948" y="1003.6" width="500" height="1.6" fill="#565656" />
<rect x="988.1" y="962" width="1.3" height="41.6" fill="#585858" />
<rect x="1030.3" y="962" width="1.3" height="41.6" fill="#585858" />
<rect x="1042.2" y="962" width="1.3" height="41.6" fill="#585858" />
<path d="M1057.8 980L1065.1 986.4L1072.4 980" fill="none" stroke="#f2f2f2" stroke-width="2.2"/>
<rect x="1093.05" y="966.95" width="33.8" height="33.9" fill="#ffffff" stroke="#000" stroke-width="1.9"/>
<rect x="1103.2" y="973.9" width="14.5" height="20.1" fill="#fdf3f9" />
<rect x="1103.2" y="973.9" width="14.5" height="2.8" fill="#dc8cc0" />
<rect x="1103.2" y="991.2" width="14.5" height="2.8" fill="#dc8cc0" />
<rect x="1103.2" y="979.2" width="14.5" height="0.7" fill="#e7a9d0" />
<rect x="1103.2" y="987.6" width="14.5" height="0.7" fill="#e7a9d0" />
<rect x="1103.2" y="973.9" width="0.8" height="20.1" fill="#e29cc9" />
<rect x="1116.9" y="973.9" width="0.8" height="20.1" fill="#e29cc9" />
<rect x="1109" y="980.4" width="6.4" height="1.8" fill="#555" />
<rect x="1108.2" y="982.4" width="8" height="2.4" fill="#3a3a3a" />
<rect x="1108" y="982.6" width="1.4" height="1.6" fill="#e01060" />
<rect x="1114.4" y="979.8" width="2.2" height="1.8" fill="#c2186b" />
<text x="1137.2" y="992.1" font-size="21.6" fill="#d6d6d6" stroke="#d6d6d6" stroke-width="0.65" stroke-linejoin="round" textLength="55.2" lengthAdjust="spacingAndGlyphs" >Modo</text>
<text x="1197.9" y="992.1" font-size="21.6" fill="#d6d6d6" stroke="#d6d6d6" stroke-width="0.65" stroke-linejoin="round" textLength="23.9" lengthAdjust="spacingAndGlyphs" >de</text>
<text x="1228.1" y="992.1" font-size="21.6" fill="#d6d6d6" stroke="#d6d6d6" stroke-width="0.65" stroke-linejoin="round" textLength="112.7" lengthAdjust="spacingAndGlyphs" >aislamiento</text>
<rect x="948" y="1006.1" width="39.8" height="4" fill="#44607b" />
<rect x="990" y="1006.1" width="40" height="4" fill="#44607b" />
<rect x="1032" y="1006.1" width="10" height="4" fill="#44607b" />
<rect x="1044" y="1006.1" width="402" height="4" fill="#44607b" />
<rect x="1034" y="1007.8" width="6" height="2.4" fill="#4dffff" />
<rect x="1138" y="1007.8" width="36" height="2.4" fill="#000" />
</svg>
</body></html>
